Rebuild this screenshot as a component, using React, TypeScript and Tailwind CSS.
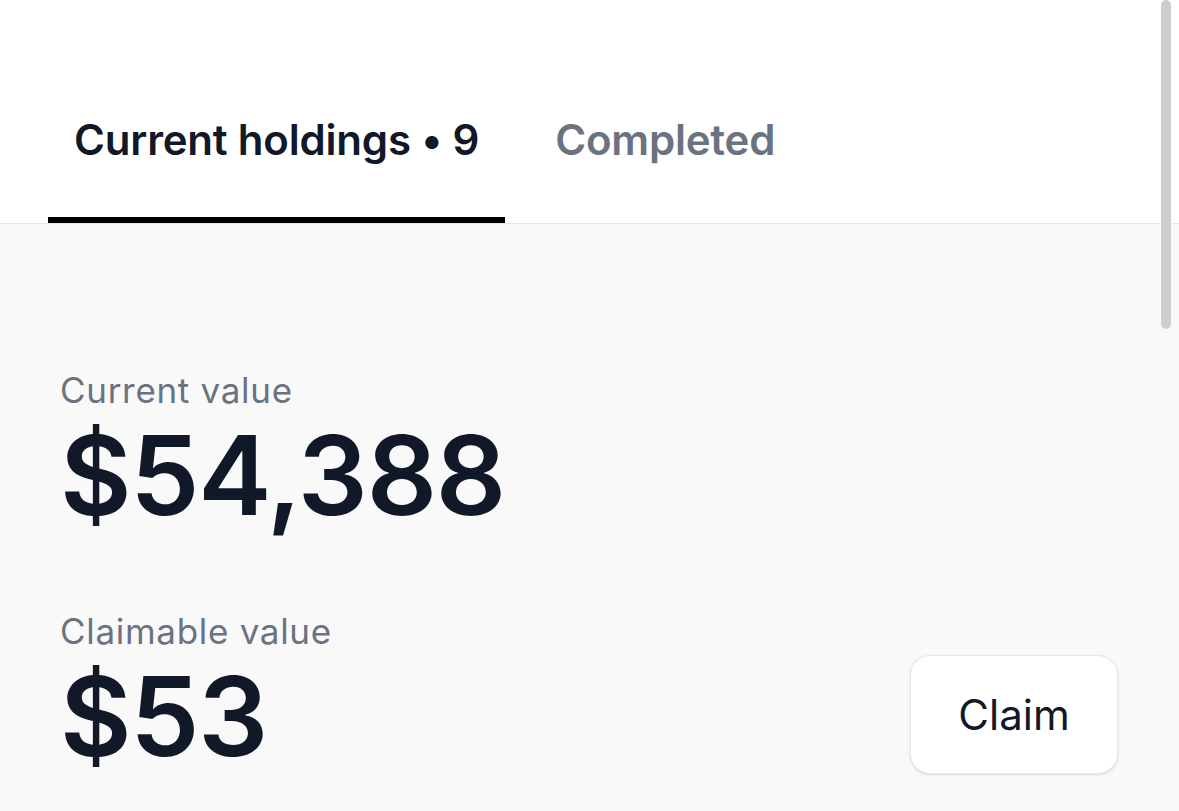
const tabs = [
  { label: "Current holdings • 9", active: true },
  { label: "Completed", active: false },
];

function Stat({ label, value }: { label: string; value: string }) {
  return (
    <div>
      <p className="text-[35px] leading-[40px] tracking-[0.7px] text-[#6b7280]">{label}</p>
      <p className="mt-[10px] text-[110px] leading-[110px] font-semibold tracking-[-1.2px] text-[#111827]">{value}</p>
    </div>
  );
}

export default function App() {
  return (
    <div
      className="relative h-[811px] w-full overflow-hidden bg-[#f9f9fa]"
      style={{ fontFamily: "Inter, 'Noto Sans', sans-serif" }}
    >
      <header className="border-b border-[#e5e7eb] bg-white">
        <nav className="flex gap-6 pl-12">
          {tabs.map((tab) => (
            <button
              key={tab.label}
              type="button"
              className={
                tab.active
                  ? "border-b-[6px] border-black px-[26px] pt-[113px] pb-[51px] text-[42px] leading-[53px] tracking-[-0.2px] font-semibold text-[#111827]"
                  : "border-b-[6px] border-transparent px-[26px] pt-[113px] pb-[51px] text-[42px] leading-[53px] tracking-[-0.2px] font-semibold text-[#6b7280]"
              }
            >
              {tab.label}
            </button>
          ))}
        </nav>
      </header>

      <main className="pl-[60px] pr-[61px] pt-[146px]">
        <Stat label="Current value" value="$54,388" />
        <div className="mt-[81px] flex items-end justify-between">
          <Stat label="Claimable value" value="$53" />
          <button
            type="button"
            className="-mb-[3px] h-[119px] w-[208px] rounded-[20px] border border-[#e5e7eb] bg-white text-[42px] text-[#111827] shadow-sm"
          >
            Claim
          </button>
        </div>
      </main>

      <div className="absolute right-[8px] top-0 h-[329px] w-[10px] rounded-full bg-[#cdcdcd]" />
    </div>
  );
}
